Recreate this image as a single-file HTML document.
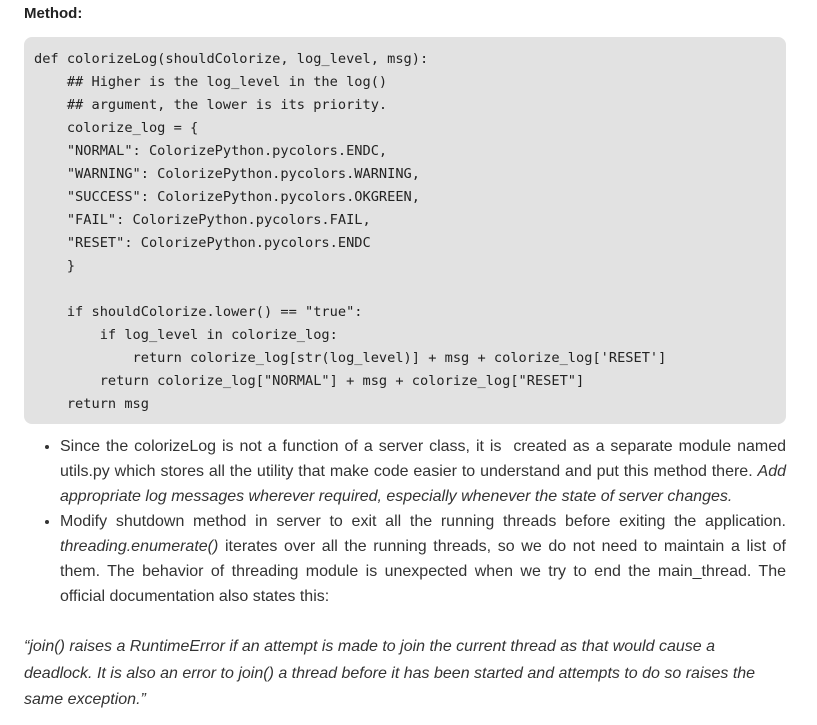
<!DOCTYPE html>
<html><head><meta charset="utf-8"><style>
body{margin:0;background:#fff;width:817px;height:725px;overflow:hidden;font-family:"Liberation Sans",sans-serif;color:#333;}
.h{position:absolute;left:24px;top:5px;font-weight:bold;font-size:15px;color:#222;}
pre{position:absolute;left:24px;top:37px;width:762px;height:387px;margin:0;box-sizing:border-box;background:#e2e2e2;border-radius:8px;padding:11px 10px;font-family:"DejaVu Sans Mono","Liberation Mono",monospace;font-size:13.65px;line-height:23px;color:#222;}
ul{position:absolute;left:40px;top:434px;width:746px;margin:0;padding:0 0 0 20px;font-size:16px;line-height:25px;text-align:justify;list-style:disc;box-sizing:border-box;}
.q{position:absolute;left:24px;top:634px;width:745px;font-size:16px;line-height:26.5px;font-style:italic;}
</style></head><body>
<div class="h">Method:</div>
<pre>def colorizeLog(shouldColorize, log_level, msg):
    ## Higher is the log_level in the log()
    ## argument, the lower is its priority.
    colorize_log = {
    "NORMAL": ColorizePython.pycolors.ENDC,
    "WARNING": ColorizePython.pycolors.WARNING,
    "SUCCESS": ColorizePython.pycolors.OKGREEN,
    "FAIL": ColorizePython.pycolors.FAIL,
    "RESET": ColorizePython.pycolors.ENDC
    }

    if shouldColorize.lower() == "true":
        if log_level in colorize_log:
            return colorize_log[str(log_level)] + msg + colorize_log['RESET']
        return colorize_log["NORMAL"] + msg + colorize_log["RESET"]
    return msg</pre>
<ul>
<li>Since the colorizeLog is not a function of a server class, it is&nbsp; created as a separate module named utils.py which stores all the utility that make code easier to understand and put this method there. <i>Add appropriate log messages wherever required, especially whenever the state of server changes.</i></li>
<li>Modify shutdown method in server to exit all the running threads before exiting the application. <i>threading.enumerate()</i> iterates over all the running threads, so we do not need to maintain a list of them. The behavior of threading module is unexpected when we try to end the main_thread. The official documentation also states this:</li>
</ul>
<div class="q">“join() raises a RuntimeError if an attempt is made to join the current thread as that would cause a deadlock. It is also an error to join() a thread before it has been started and attempts to do so raises the same exception.”</div>
</body></html>
